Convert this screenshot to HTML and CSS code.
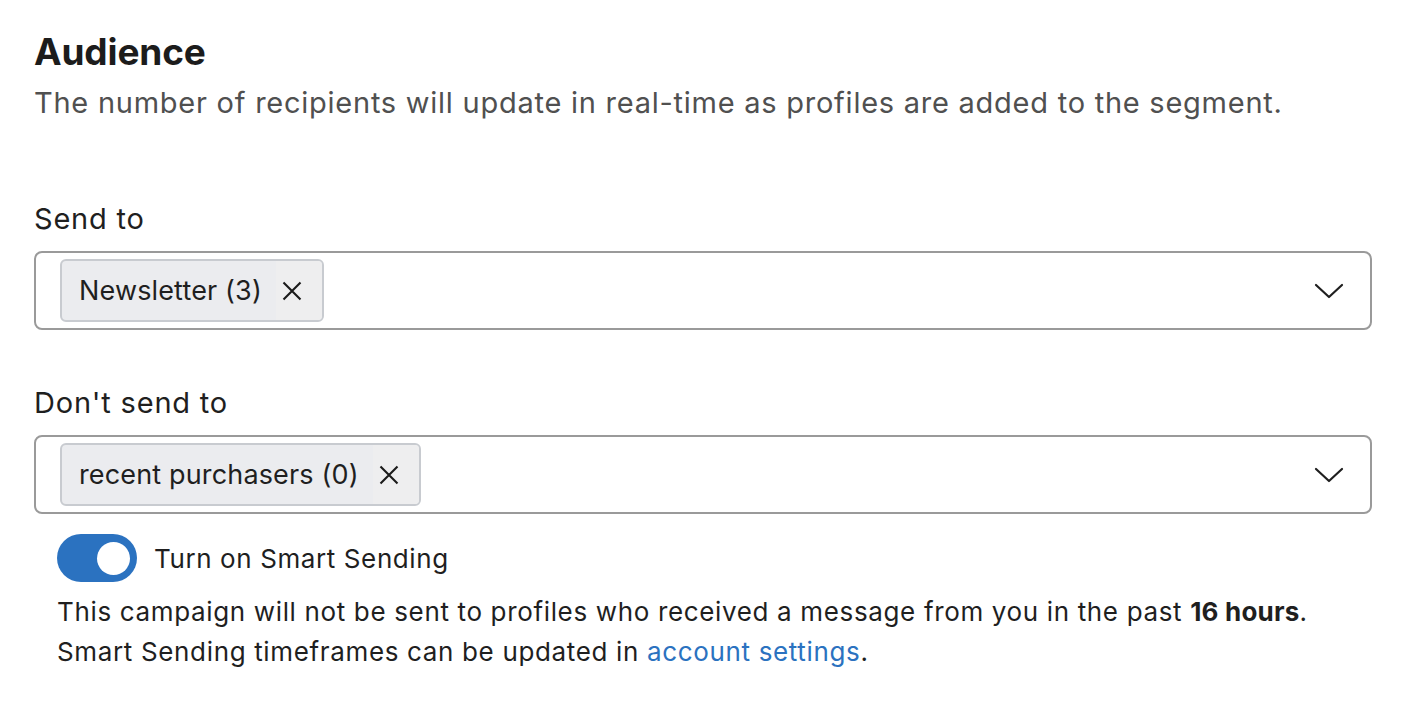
FILE: index.html
```html
<!DOCTYPE html>
<html>
<head>
<meta charset="utf-8">
<link rel="stylesheet" href="styles.css">
</head>
<body>
<main class="panel">
  <h1 class="title">Audience</h1>
  <p class="subtitle">The number of recipients will update in real-time as profiles are added to the segment.</p>

  <section class="field field-first">
    <label class="label">Send to</label>
    <div class="select">
      <div class="chips">
        <span class="chip"><span class="chip-text">Newsletter (3)</span><span class="chip-x"><svg width="20" height="20" viewBox="0 0 20 20"><path d="M1.5 1.5L18.5 18.5M18.5 1.5L1.5 18.5" stroke="#1a1a1a" stroke-width="2.1" fill="none"/></svg></span></span>
      </div>
      <svg class="chevron" width="30" height="16" viewBox="0 0 30 16"><path d="M2 2L15 14L28 2" stroke="#1f1f1f" stroke-width="2.2" fill="none" stroke-linecap="round" stroke-linejoin="round"/></svg>
    </div>
  </section>

  <section class="field">
    <label class="label">Don't send to</label>
    <div class="select">
      <div class="chips">
        <span class="chip"><span class="chip-text">recent purchasers (0)</span><span class="chip-x"><svg width="20" height="20" viewBox="0 0 20 20"><path d="M1.5 1.5L18.5 18.5M18.5 1.5L1.5 18.5" stroke="#1a1a1a" stroke-width="2.1" fill="none"/></svg></span></span>
      </div>
      <svg class="chevron" width="30" height="16" viewBox="0 0 30 16"><path d="M2 2L15 14L28 2" stroke="#1f1f1f" stroke-width="2.2" fill="none" stroke-linecap="round" stroke-linejoin="round"/></svg>
    </div>
  </section>

  <div class="smart">
    <div class="toggle-row">
      <span class="toggle"><span class="knob"></span></span>
      <span class="toggle-label">Turn on Smart Sending</span>
    </div>
    <p class="note">This campaign will not be sent to profiles who received a message from you in the past <strong>16 hours</strong>.<br>Smart Sending timeframes can be updated in <a class="link" href="#">account settings</a>.</p>
  </div>
</main>
</body>
</html>
```

FILE: styles.css
```css
html, body {
  margin: 0;
  padding: 0;
  background: #ffffff;
}
body {
  font-family: Inter, "Noto Sans", "Liberation Sans", sans-serif;
  color: #1f1f1f;
}
.panel {
  padding: 29px 30px 0 34px;
}
.title {
  margin: 0;
  font-size: 37px;
  font-weight: 700;
  line-height: 46px;
  letter-spacing: -0.15px;
  color: #1c1c1c;
}
.subtitle {
  margin: 8px 0 0 0;
  font-size: 29px;
  line-height: 40px;
  color: #505050;
  letter-spacing: 0.75px;
}
.field {
  display: flex;
  flex-direction: column;
}
.field-first {
  margin-top: 76px;
}
.field + .field {
  margin-top: 53px;
}
.label {
  font-size: 29px;
  line-height: 40px;
  letter-spacing: 0.8px;
  color: #1f1f1f;
  margin-bottom: 12px;
}
.select {
  box-sizing: border-box;
  height: 79px;
  border: 2px solid #9a9a9a;
  border-radius: 8px;
  display: flex;
  align-items: center;
  justify-content: space-between;
  padding: 0 26px 0 24px;
}
.chips {
  display: flex;
}
.chip {
  box-sizing: border-box;
  height: 63px;
  display: inline-flex;
  align-items: center;
  background: #ebecef;
  border: 2px solid #c8cbd0;
  border-radius: 6px;
  font-size: 27px;
  color: #1f1f1f;
  overflow: hidden;
}
.chip-text {
  padding-left: 17px;
  padding-right: 14px;
  letter-spacing: 0.15px;
}
.chip-x {
  align-self: stretch;
  display: flex;
  align-items: center;
  padding: 0 20px 0 6px;
  background: #eeeeef;
}
.chip-x svg {
  display: block;
}
.chevron {
  display: block;
}
.smart {
  padding-left: 23px;
  margin-top: 20px;
}
.toggle-row {
  display: flex;
  align-items: center;
  gap: 17px;
}
.toggle {
  width: 80px;
  height: 48px;
  border-radius: 24px;
  background: #2b72c0;
  display: flex;
  align-items: center;
  justify-content: flex-end;
  padding-right: 7px;
  box-sizing: border-box;
}
.knob {
  width: 33px;
  height: 33px;
  border-radius: 50%;
  background: #ffffff;
}
.toggle-label {
  font-size: 26px;
  letter-spacing: 0.6px;
  color: #1f1f1f;
}
.note {
  margin: 10px 0 0 0;
  font-size: 26px;
  line-height: 40px;
  letter-spacing: 0.65px;
  color: #1f1f1f;
}
.note strong {
  font-weight: 700;
  letter-spacing: 0.2px;
}
.link {
  color: #2b72c0;
  text-decoration: none;
}
```
